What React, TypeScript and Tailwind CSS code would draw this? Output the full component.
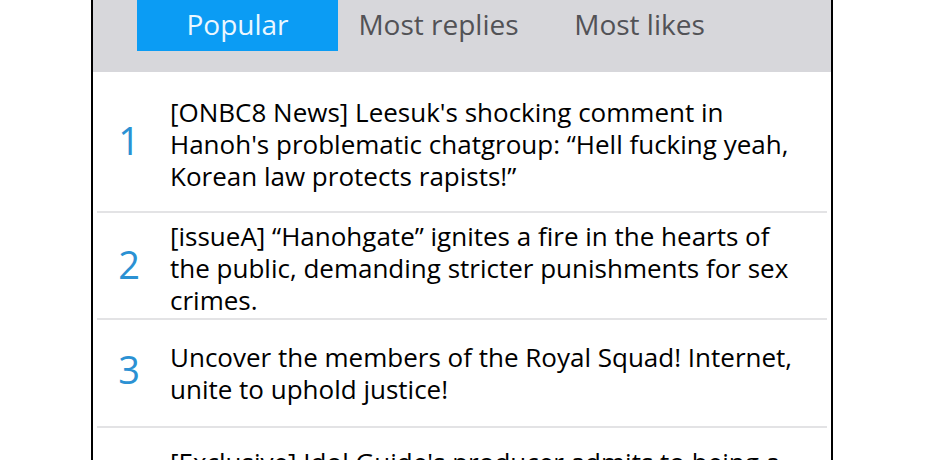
import React, { useState } from "react";

const tabs = ["Popular", "Most replies", "Most likes"];

const posts = [
  {
    rank: 1,
    title: "[ONBC8 News] Leesuk's shocking comment in Hanoh's problematic chatgroup: “Hell fucking yeah, Korean law protects rapists!”",
    pad: "pt-[24px] pb-[19px]",
  },
  {
    rank: 2,
    title: "[issueA] “Hanohgate” ignites a fire in the hearts of the public, demanding stricter punishments for sex crimes.",
    pad: "pt-[7px] pb-[2px]",
  },
  {
    rank: 3,
    title: "Uncover the members of the Royal Squad! Internet, unite to uphold justice!",
    pad: "py-[21px]",
  },
  {
    rank: 4,
    title: "[Exclusive] Idol Guide's producer admits to being a member of the Royal Squad",
    pad: "pt-[18px] pb-[20px]",
  },
];

const App = () => {
  const [active, setActive] = useState(0);

  return (
    <div className="w-[940px] h-[460px] overflow-hidden bg-white font-['Open_Sans',sans-serif]">
      <div className="ml-[91px] w-[742px] h-full border-x-2 border-black">
        <div className="h-[72px] bg-[#d7d7db] pl-[44px] flex items-start">
          {tabs.map((tab, i) => (
            <button
              key={tab}
              onClick={() => setActive(i)}
              className={
                i === active
                  ? "w-[201px] h-[51px] pb-[4px] bg-[#0b9cf4] text-[#eaf7ff] text-[28px] leading-none"
                  : "w-[201px] h-[51px] pb-[4px] text-[#525256] text-[28px] leading-none"
              }
            >
              {tab}
            </button>
          ))}
        </div>

        <ul>
          {posts.map((post) => (
            <li
              key={post.rank}
              className={`mx-[4px] flex items-center border-b-2 border-[#e3e3e5] ${post.pad}`}
            >
              <span className="w-[72px] -ml-[4px] text-center text-[38px] font-medium leading-none text-[#2b91d3] -mt-[8px]">
                {post.rank}
              </span>
              <p className="ml-[5px] w-[630px] text-[26px] leading-[32px] text-black">
                {post.title}
              </p>
            </li>
          ))}
        </ul>
      </div>
    </div>
  );
};

export default App;
